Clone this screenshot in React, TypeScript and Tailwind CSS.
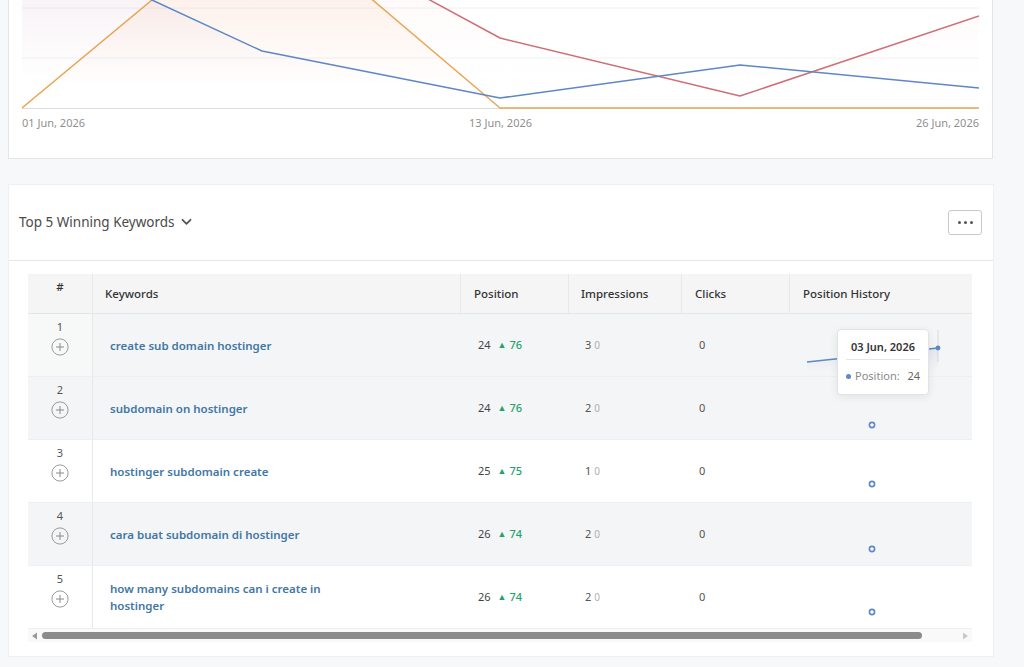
import React from "react";

type Row = {
  n: number;
  kw: string;
  pos: number;
  gain: number;
  imp: number;
  clicks: number;
  dotY: number;
  gray: boolean;
};

const rows: Row[] = [
  { n: 1, kw: "create sub domain hostinger", pos: 24, gain: 76, imp: 3, clicks: 0, dotY: 0, gray: true },
  { n: 2, kw: "subdomain on hostinger", pos: 24, gain: 76, imp: 2, clicks: 0, dotY: 48, gray: true },
  { n: 3, kw: "hostinger subdomain create", pos: 25, gain: 75, imp: 1, clicks: 0, dotY: 44, gray: false },
  { n: 4, kw: "cara buat subdomain di hostinger", pos: 26, gain: 74, imp: 2, clicks: 0, dotY: 46, gray: true },
  { n: 5, kw: "how many subdomains can i create in hostinger", pos: 26, gain: 74, imp: 2, clicks: 0, dotY: 46, gray: false },
];

function PlusCircle() {
  return (
    <svg width="18" height="18" viewBox="0 0 18 18" fill="none">
      <circle cx="9" cy="9" r="8.1" stroke="#9a9a9a" strokeWidth="1" />
      <path d="M9 5v8M5 9h8" stroke="#8a8a8a" strokeWidth="1" />
    </svg>
  );
}

function Chart() {
  const ox = 22;
  const pts = (a: [number, number][]) => a.map(([x, y]) => `${x - ox},${y}`).join(" ");
  const orange: [number, number][] = [[22, 108], [170, -15], [355, -15], [500, 108], [979, 108]];
  const blue: [number, number][] = [[120, -16], [152, 0], [262, 51], [500, 98], [740, 65], [979, 88]];
  const red: [number, number][] = [[380, -27], [500, 38], [740, 96], [979, 16]];
  const area = (a: [number, number][]) => `${a[0][0] === 22 ? "" : "0,-30 "}${pts(a)} 957,108 0,108`;
  return (
    <svg width="957" height="109" viewBox="0 0 957 109" className="block overflow-hidden">
      <defs>
        <linearGradient id="go" x1="0" y1="0" x2="0" y2="1">
          <stop offset="0" stopColor="#f6b07a" stopOpacity="0.14" />
          <stop offset="0.85" stopColor="#f6b07a" stopOpacity="0" />
        </linearGradient>
        <linearGradient id="gb" x1="0" y1="0" x2="0" y2="1">
          <stop offset="0" stopColor="#a898d0" stopOpacity="0.10" />
          <stop offset="0.8" stopColor="#a898d0" stopOpacity="0" />
        </linearGradient>
        <linearGradient id="gr" x1="0" y1="0" x2="0" y2="1">
          <stop offset="0" stopColor="#f2a6a0" stopOpacity="0.07" />
          <stop offset="0.8" stopColor="#f2a6a0" stopOpacity="0" />
        </linearGradient>
      </defs>
      <line x1="0" y1="8" x2="957" y2="8" stroke="#f0f0f2" strokeWidth="1" />
      <line x1="0" y1="58" x2="957" y2="58" stroke="#f1f1f3" strokeWidth="1" />
      <polygon points={area(blue)} fill="url(#gb)" />
      <polygon points={area(orange)} fill="url(#go)" />
      <polygon points={area(red)} fill="url(#gr)" />
      <line x1="0" y1="108.5" x2="957" y2="108.5" stroke="#dddddd" strokeWidth="1" />
      <polyline points={pts(orange)} fill="none" stroke="#e8a657" strokeWidth="1.5" strokeLinejoin="round" />
      <polyline points={pts(red)} fill="none" stroke="#cf6f78" strokeWidth="1.5" strokeLinejoin="round" />
      <polyline points={pts(blue)} fill="none" stroke="#5d87c6" strokeWidth="1.5" strokeLinejoin="round" />
    </svg>
  );
}

export default function App() {
  return (
    <div className="w-[1024px] h-[667px] overflow-hidden bg-[#f7f8fa] font-['Noto_Sans','Open_Sans',sans-serif]">
      <div className="pl-2 w-[994px]">
        {/* Chart card (continues above viewport) */}
        <div className="w-[985px] h-[159px] bg-white border-x border-b border-[#e3e5e8] pl-[13px] pr-[13px]">
          <Chart />
          <div className="flex justify-between w-[957px] mt-[7px] text-[11px] leading-[14px] text-[#8f8f8f]">
            <span>01 Jun, 2026</span>
            <span>13 Jun, 2026</span>
            <span>26 Jun, 2026</span>
          </div>
        </div>

        {/* Keywords card */}
        <div className="mt-[25px] w-[986px] h-[473px] bg-white border border-[#eef0f2]">
          <div className="h-[76px] flex items-center justify-between pl-[10px] pr-[11px] border-b border-[#e6e7ea]">
            <div className="flex items-center gap-[6px] text-[13.5px] text-[#4a4a4a] -mt-[1px]">
              <span>Top 5 Winning Keywords</span>
              <svg width="11" height="8" viewBox="0 0 11 8" fill="none">
                <path d="M1.5 1.8l4 4 4-4" stroke="#555" strokeWidth="1.8" strokeLinecap="round" strokeLinejoin="round" />
              </svg>
            </div>
            <div className="w-[34px] h-[25px] border border-[#c9c9c9] rounded-[3px] flex items-center justify-center gap-[3px]">
              <span className="w-[3px] h-[3px] rounded-full bg-[#555]" />
              <span className="w-[3px] h-[3px] rounded-full bg-[#555]" />
              <span className="w-[3px] h-[3px] rounded-full bg-[#555]" />
            </div>
          </div>

          <div className="pl-[19px] pt-[13px]">
            <div className="relative w-[944px]">
              {/* header */}
              <div className="grid grid-cols-[65px_368px_108px_113px_108px_182px] h-[40px] bg-[#f5f5f6] border-b border-[#e4e5e7] text-[11.5px] text-[#333] font-medium">
                <div className="flex justify-center pt-[4px] border-r border-[#e7e8ea]">#</div>
                <div className="flex items-center pl-[12px] border-r border-[#e7e8ea]">Keywords</div>
                <div className="flex items-center pl-[13px] border-r border-[#e7e8ea]">Position</div>
                <div className="flex items-center pl-[12px] border-r border-[#e7e8ea]">Impressions</div>
                <div className="flex items-center pl-[13px] border-r border-[#e7e8ea]">Clicks</div>
                <div className="flex items-center pl-[13px]">Position History</div>
              </div>

              {rows.map((r) => (
                <div
                  key={r.n}
                  className={`grid grid-cols-[65px_368px_108px_113px_108px_182px] h-[63px] border-b border-[#eeeff1] ${r.gray ? "bg-[#f4f5f6]" : "bg-white"}`}
                >
                  <div className={`flex flex-col items-center pt-[6px] border-r border-[#e7e8ea] ${r.n === 1 ? "bg-[#f7f8f8]" : ""}`}>
                    <span className="text-[11px] leading-[14px] text-[#555]">{r.n}</span>
                    <span className="mt-[4px]"><PlusCircle /></span>
                  </div>
                  <div className="flex items-center pl-[17px]">
                    <span className="w-[230px] text-[11.5px] leading-[17px] font-semibold text-[#4277a6]">{r.kw}</span>
                  </div>
                  <div className="flex items-center pl-[17px] text-[11px] text-[#444]">
                    <span>{r.pos}</span>
                    <span className="ml-[7px] text-[9px] text-[#23a26d]">▲</span>
                    <span className="ml-[3px] text-[#23a26d] font-medium">{r.gain}</span>
                  </div>
                  <div className="flex items-center pl-[16px] text-[11px] text-[#555]">
                    <span>{r.imp}</span>
                    <span className="ml-[3px] text-[10px] text-[#b0b0b0]">0</span>
                  </div>
                  <div className="flex items-center pl-[17px] text-[11px] text-[#555]">{r.clicks}</div>
                  <div className="relative">
                    {r.n !== 1 && (
                      <svg width="8" height="8" viewBox="0 0 8 8" className="absolute" style={{ left: 78, top: r.dotY - 4 }}>
                        <circle cx="4" cy="4" r="2.6" fill="white" stroke="#5d87c6" strokeWidth="1.6" />
                      </svg>
                    )}
                  </div>
                </div>
              ))}

              {/* sparkline for row 1 */}
              <svg width="182" height="63" viewBox="0 0 182 63" className="absolute left-[762px] top-[40px]">
                <defs>
                  <linearGradient id="sp" x1="0" y1="0" x2="0" y2="1">
                    <stop offset="0" stopColor="#5d87c6" stopOpacity="0.12" />
                    <stop offset="1" stopColor="#5d87c6" stopOpacity="0" />
                  </linearGradient>
                </defs>
                <line x1="148" y1="16" x2="148" y2="48" stroke="#d9d9d9" strokeWidth="1" />
                <polygon points="17,48 148,34 148,58 17,58" fill="url(#sp)" />
                <polyline points="17,48 148,34" fill="none" stroke="#5d87c6" strokeWidth="1.5" />
                <circle cx="148" cy="34" r="2.4" fill="#5d87c6" />
              </svg>

              {/* tooltip */}
              <div className="absolute left-[809px] top-[55px] w-[92px] h-[66px] bg-white border border-[#e3e3e3] rounded-[4px] shadow-[0_2px_8px_rgba(0,0,0,0.08)] px-[8px]">
                <div className="h-[30px] flex items-end justify-center pb-[4px] text-[11px] font-semibold text-[#333] border-b border-[#e6e6e6]">
                  03 Jun, 2026
                </div>
                <div className="h-[33px] flex items-center text-[11px]">
                  <span className="w-[5px] h-[5px] rounded-full bg-[#5d87c6]" />
                  <span className="ml-[4px] text-[#8a8a8a]">Position:</span>
                  <span className="ml-auto text-[#666]">24</span>
                </div>
              </div>

              {/* scrollbar */}
              <div className="h-[13px] flex items-center bg-[#f9f9f9] pl-[3px] pr-[3px]">
                <svg width="7" height="8" viewBox="0 0 7 8"><path d="M6 0.5v7L1 4z" fill="#9a9a9a" /></svg>
                <div className="ml-[4px] w-[880px] h-[7px] rounded-full bg-[#8b8b8b]" />
                <div className="flex-1" />
                <svg width="7" height="8" viewBox="0 0 7 8"><path d="M1 0.5v7L6 4z" fill="#c8c8c8" /></svg>
              </div>
            </div>
          </div>
        </div>
      </div>
    </div>
  );
}
